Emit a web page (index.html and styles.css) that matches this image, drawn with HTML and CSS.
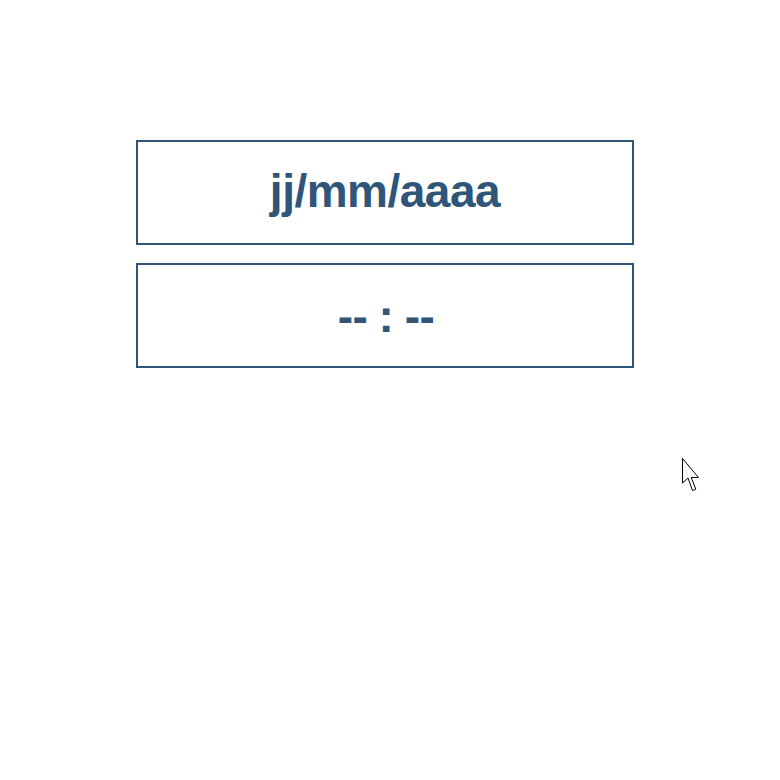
FILE: index.html
```html
<!DOCTYPE html>
<html>
<head>
<meta charset="utf-8">
<link rel="stylesheet" href="styles.css">
</head>
<body>
<main class="page">
  <div class="field field-date">jj/mm/aaaa</div>
  <div class="field field-time">-- : --</div>
</main>
<svg class="cursor" width="18" height="36" viewBox="0 0 18 36">
  <path d="M0.5 0.5 L0.5 25 L6 20 L10.5 32.5 L13.8 31.2 L9.2 19.5 L16.5 19.5 Z" fill="#fff" stroke="#000" stroke-width="1" stroke-linejoin="miter"/>
</svg>
</body>
</html>
```

FILE: styles.css
```css
html, body {
  margin: 0;
  padding: 0;
  background: #ffffff;
}
.page {
  display: flex;
  flex-direction: column;
  gap: 18px;
  padding-top: 140px;
  padding-left: 136px;
}
.field {
  box-sizing: border-box;
  width: 498px;
  height: 105px;
  border: 2px solid #2f5579;
  display: flex;
  align-items: center;
  justify-content: center;
  font-family: "Liberation Sans", Arial, sans-serif;
  font-weight: bold;
  font-size: 46px;
  letter-spacing: -0.5px;
  color: #2f5579;
}
.field-date {
  padding-bottom: 4px;
}
.field-time {
  word-spacing: -1px;
  padding-left: 2px;
}
.cursor {
  position: absolute;
  left: 682px;
  top: 458px;
}
```
